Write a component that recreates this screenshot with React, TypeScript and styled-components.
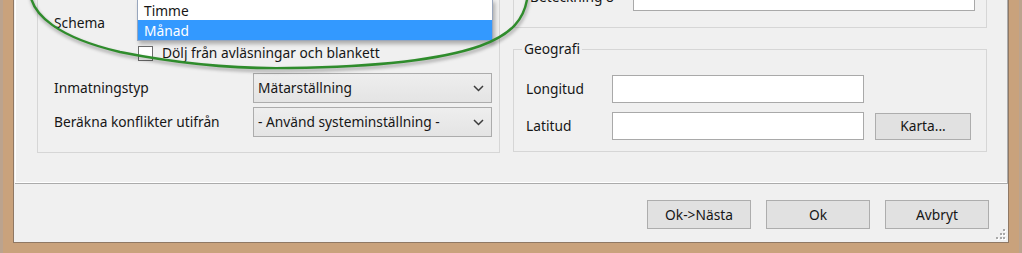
import styled, { createGlobalStyle } from 'styled-components'

const GlobalStyle = createGlobalStyle`
  html, body {
    margin: 0;
    padding: 0;
    background: #c9a27c;
  }
  body {
    font-family: "Noto Sans", "Open Sans", sans-serif;
    font-size: 13.75px;
    color: #161616;
  }
  * {
    box-sizing: border-box;
  }
`

const Frame = styled.div`
  position: relative;
  width: 1022px;
  height: 253px;
  overflow: hidden;
  display: flex;
  padding: 0 13px 10px 13px;
  background: #c9a27c;
  box-shadow: inset 3px 0 0 #bba38e, inset -3px 0 0 #bba38e;
`

const Client = styled.div`
  position: relative;
  flex: 1;
  display: flex;
  flex-direction: column;
  background: #f0f0f0;
  border: 1px solid #8f7864;
  border-top: none;
`

const TabPage = styled.div`
  height: 184px;
  margin-left: 1px;
  border-right: 1px solid #ababab;
  border-bottom: 1px solid #ababab;
  box-shadow: inset 1px -1px 0 #ffffff;
  overflow: hidden;
  display: grid;
  grid-template-columns: 463px 474px;
  column-gap: 13px;
  align-items: start;
  padding-left: 22px;
`

const LeftGroup = styled.div`
  position: relative;
  height: 153px;
  border: 1px solid #d6d6d6;
  border-top: none;
  padding: 8px 0 0 16px;
`

const RightCol = styled.div`
  display: flex;
  flex-direction: column;
`

const UpperGroup = styled.div`
  margin-top: -20px;
  height: 48px;
  border: 1px solid #d6d6d6;
  border-top: none;
  padding: 3px 11px 0 16px;
`

const GroupBox = styled.fieldset`
  margin: 13px 0 0 0;
  border: 1px solid #d6d6d6;
  padding: 0 11px 11px 12px;
  min-width: 0;

  legend {
    margin-left: -4px;
    padding: 0 2px;
    line-height: 16px;
  }
`

const FieldRow = styled.div<{ $top: number; $label: number; $h: number }>`
  display: grid;
  grid-template-columns: ${(p) => p.$label}px auto auto;
  justify-content: start;
  column-gap: 11px;
  align-items: center;
  height: ${(p) => p.$h}px;
  margin-top: ${(p) => p.$top}px;
`

const Label = styled.span`
  line-height: 16px;
  white-space: nowrap;
`

const Combo = styled.div`
  display: flex;
  align-items: center;
  justify-content: space-between;
  width: 239px;
  height: 30px;
  padding: 0 7px 0 4px;
  border: 1px solid #acacac;
  background: linear-gradient(#eeeeee, #e4e4e4);
  line-height: 16px;
  white-space: nowrap;
`

const TextBox = styled.div<{ $w: number; $h: number }>`
  width: ${(p) => p.$w}px;
  height: ${(p) => p.$h}px;
  border: 1px solid #a9a9a9;
  background: #ffffff;
`

const Button = styled.div<{ $w: number; $h: number }>`
  display: flex;
  align-items: center;
  justify-content: center;
  width: ${(p) => p.$w}px;
  height: ${(p) => p.$h}px;
  border: 1px solid #adadad;
  background: #e1e1e1;
  line-height: 16px;
`

const CheckRow = styled.div`
  display: flex;
  align-items: center;
  gap: 9px;
  height: 16px;
  margin-top: 9px;
  padding-left: 84px;
`

const CheckBox = styled.div`
  width: 15px;
  height: 15px;
  border: 1px solid #6d6d6d;
  background: #ffffff;
`

const DropList = styled.div`
  position: absolute;
  left: 99px;
  top: -1px;
  width: 356px;
  border: 1px solid #98a6bd;
  background: #ffffff;
  box-shadow: 2px 3px 4px rgba(0, 0, 0, 0.28);
  z-index: 2;
`

const DropItem = styled.div<{ $selected?: boolean }>`
  height: 20px;
  padding: 2px 0 0 6px;
  line-height: 18px;
  background: ${(p) => (p.$selected ? '#3399ff' : '#ffffff')};
  color: ${(p) => (p.$selected ? '#ffffff' : '#161616')};
`

const ButtonBar = styled.div`
  display: flex;
  justify-content: flex-end;
  gap: 15px;
  margin-top: 16px;
  padding-right: 19px;
`

const Grip = styled.svg`
  position: absolute;
  right: 2px;
  bottom: 2px;
`

const Annotation = styled.svg`
  position: absolute;
  left: 0;
  top: 0;
  pointer-events: none;
  z-index: 5;
`

function Chevron() {
  return (
    <svg width="11" height="7" viewBox="0 0 11 7">
      <path d="M1 1 L5.5 5.5 L10 1" fill="none" stroke="#3c3c3c" strokeWidth="1.5" />
    </svg>
  )
}

const ellipsePath =
  'M30 -10 C30 15, 60 38, 120 52 C180 64, 240 69, 290 68 C370 67, 440 60, 480 46 C510 35, 527 20, 528 -10'

export default function App() {
  return (
    <>
      <GlobalStyle />
      <Frame>
        <Client>
          <TabPage>
            <LeftGroup>
              <DropList>
                <DropItem>Timme</DropItem>
                <DropItem $selected>Månad</DropItem>
              </DropList>
              <FieldRow $top={0} $label={188} $h={28}>
                <Label>Schema</Label>
                <Combo>
                  Månad
                  <Chevron />
                </Combo>
              </FieldRow>
              <CheckRow>
                <CheckBox />
                <Label>Dölj från avläsningar och blankett</Label>
              </CheckRow>
              <FieldRow $top={12} $label={188} $h={30}>
                <Label>Inmatningstyp</Label>
                <Combo>
                  Mätarställning
                  <Chevron />
                </Combo>
              </FieldRow>
              <FieldRow $top={4} $label={188} $h={30}>
                <Label>Beräkna konflikter utifrån</Label>
                <Combo>
                  - Använd systeminställning -
                  <Chevron />
                </Combo>
              </FieldRow>
            </LeftGroup>
            <RightCol>
              <UpperGroup>
                <FieldRow $top={0} $label={92} $h={28}>
                  <Label>Beteckning 8</Label>
                  <TextBox $w={342} $h={28} />
                </FieldRow>
              </UpperGroup>
              <GroupBox>
                <legend>Geografi</legend>
                <FieldRow $top={18} $label={75} $h={28}>
                  <Label>Longitud</Label>
                  <TextBox $w={252} $h={28} />
                </FieldRow>
                <FieldRow $top={9} $label={75} $h={28}>
                  <Label>Latitud</Label>
                  <TextBox $w={252} $h={28} />
                  <Button $w={96} $h={27}>Karta...</Button>
                </FieldRow>
              </GroupBox>
            </RightCol>
          </TabPage>
          <ButtonBar>
            <Button $w={104} $h={29}>Ok-&gt;Nästa</Button>
            <Button $w={104} $h={29}>Ok</Button>
            <Button $w={104} $h={29}>Avbryt</Button>
          </ButtonBar>
          <Grip width="12" height="12" viewBox="0 0 12 12">
            {[
              [9, 1],
              [6, 5],
              [9, 5],
              [2, 9],
              [6, 9],
              [9, 9],
            ].map(([x, y]) => (
              <g key={`${x}-${y}`}>
                <rect x={x + 1} y={y + 1} width="2" height="2" fill="#ffffff" />
                <rect x={x} y={y} width="2" height="2" fill="#a8a8a8" />
              </g>
            ))}
          </Grip>
        </Client>
        <Annotation width="1022" height="253" viewBox="0 0 1022 253">
          <defs>
            <filter id="soft" x="-10%" y="-10%" width="120%" height="140%">
              <feGaussianBlur stdDeviation="1.5" />
            </filter>
          </defs>
          <path
            d={ellipsePath}
            fill="none"
            stroke="rgba(0,0,0,0.22)"
            strokeWidth="4"
            transform="translate(1 2.5)"
            filter="url(#soft)"
          />
          <path d={ellipsePath} fill="none" stroke="#2f8c2c" strokeWidth="2.4" />
        </Annotation>
      </Frame>
    </>
  )
}
